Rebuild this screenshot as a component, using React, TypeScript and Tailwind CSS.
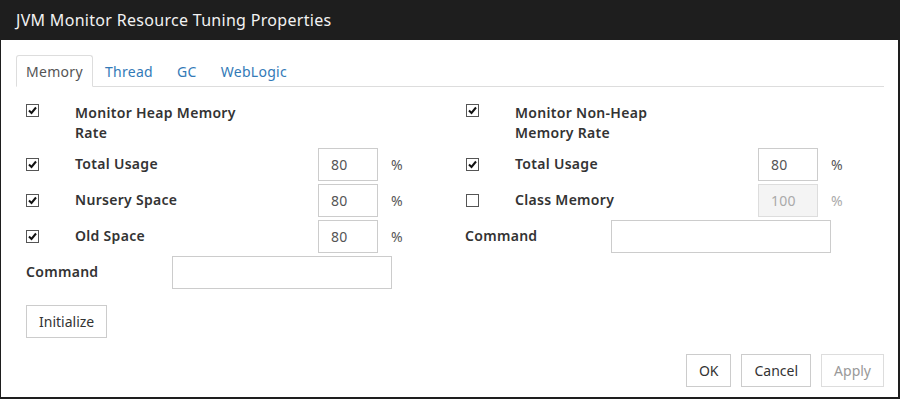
import React from 'react'

const FONT = "font-['Noto_Sans',sans-serif]"

function Check({ checked }: { checked: boolean }) {
  return (
    <span className="flex h-[13px] w-[13px] shrink-0 items-center justify-center border border-[#555] bg-white">
      {checked && (
        <svg width="9" height="9" viewBox="0 0 9 9">
          <path d="M1 4.5 L3.5 7 L8 1.5" fill="none" stroke="#111" strokeWidth="2" />
        </svg>
      )}
    </span>
  )
}

function PercentRow({
  label,
  value,
  checked = true,
  disabled = false,
}: {
  label: string
  value: string
  checked?: boolean
  disabled?: boolean
}) {
  return (
    <div className="flex h-[33px] items-center">
      <div className="w-[49px]">
        <Check checked={checked} />
      </div>
      <div className="-mt-[2px] w-[243px] font-semibold text-[#333]">{label}</div>
      <div
        className={
          disabled
            ? 'flex h-[33px] w-[60px] items-center border border-[#ddd] bg-[#f4f4f4] pl-[12px] text-[#aaa]'
            : 'flex h-[33px] w-[60px] items-center border border-[#ccc] bg-white pl-[12px] text-[#555]'
        }
      >
        {value}
      </div>
      <div className={disabled ? 'ml-[13px] text-[#aaa]' : 'ml-[13px] text-[#555]'}>%</div>
    </div>
  )
}

function CommandRow() {
  return (
    <div className="flex h-[33px] items-center">
      <div className="-mt-[2px] w-[146px] font-semibold text-[#333]">Command</div>
      <div className="h-[33px] w-[220px] border border-[#ccc] bg-white" />
    </div>
  )
}

function Heading({ lines }: { lines: [string, string] }) {
  return (
    <div className="flex items-start leading-[20px]">
      <div className="w-[49px] pt-[1px]">
        <Check checked />
      </div>
      <div className="font-semibold text-[#333]">
        <div>{lines[0]}</div>
        <div>{lines[1]}</div>
      </div>
    </div>
  )
}

function Btn({ children, disabled = false }: { children: React.ReactNode; disabled?: boolean }) {
  return (
    <button
      className={
        disabled
          ? 'h-[33px] border border-[#ddd] bg-white px-[12px] tracking-normal text-[#999]'
          : 'h-[33px] border border-[#ccc] bg-white px-[12px] tracking-normal text-[#333]'
      }
    >
      {children}
    </button>
  )
}

export default function App() {
  const tabs = ['Memory', 'Thread', 'GC', 'WebLogic']

  return (
    <div className={`${FONT} flex h-[399px] w-[900px] flex-col border-b-2 border-l border-r-2 border-[#1e1e1e] bg-white text-[14px] tracking-[0.3px]`}>
      {/* Title bar */}
      <div className="flex h-[40px] shrink-0 items-center bg-[#1e1e1e] pl-[15px] text-[16px] text-[#f2f2f2]">
        JVM Monitor Resource Tuning Properties
      </div>

      <div className="flex flex-1 flex-col pl-[15px] pr-[14px] pt-[15px]">
        {/* Tabs */}
        <div className="flex h-[32px] border-b border-[#ddd]">
          {tabs.map((t, i) => (
            <div
              key={t}
              className={
                i === 0
                  ? '-mb-px flex h-[32px] items-center rounded-t-[3px] border border-[#ddd] border-b-white bg-white px-[9px] text-[#555]'
                  : '-mb-px flex h-[32px] items-center px-[12px] text-[#337ab7]'
              }
            >
              {t}
            </div>
          ))}
        </div>

        {/* Columns */}
        <div className="grid grid-cols-[440px_1fr] pl-[10px] pt-[16px]">
          <div className="flex flex-col">
            <Heading lines={['Monitor Heap Memory', 'Rate']} />
            <div className="mt-[5px] flex flex-col gap-[3px]">
              <PercentRow label="Total Usage" value="80" />
              <PercentRow label="Nursery Space" value="80" />
              <PercentRow label="Old Space" value="80" />
              <CommandRow />
            </div>
          </div>
          <div className="flex flex-col">
            <Heading lines={['Monitor Non-Heap', 'Memory Rate']} />
            <div className="mt-[5px] flex flex-col gap-[3px]">
              <PercentRow label="Total Usage" value="80" />
              <PercentRow label="Class Memory" value="100" checked={false} disabled />
              <div className="-ml-px">
                <CommandRow />
              </div>
            </div>
          </div>
        </div>

        <div className="mt-[16px] pl-[10px]">
          <Btn>Initialize</Btn>
        </div>

        {/* Footer */}
        <div className="mt-auto flex justify-end gap-[10px] pb-[10px]">
          <Btn>OK</Btn>
          <Btn>Cancel</Btn>
          <Btn disabled>Apply</Btn>
        </div>
      </div>
    </div>
  )
}
